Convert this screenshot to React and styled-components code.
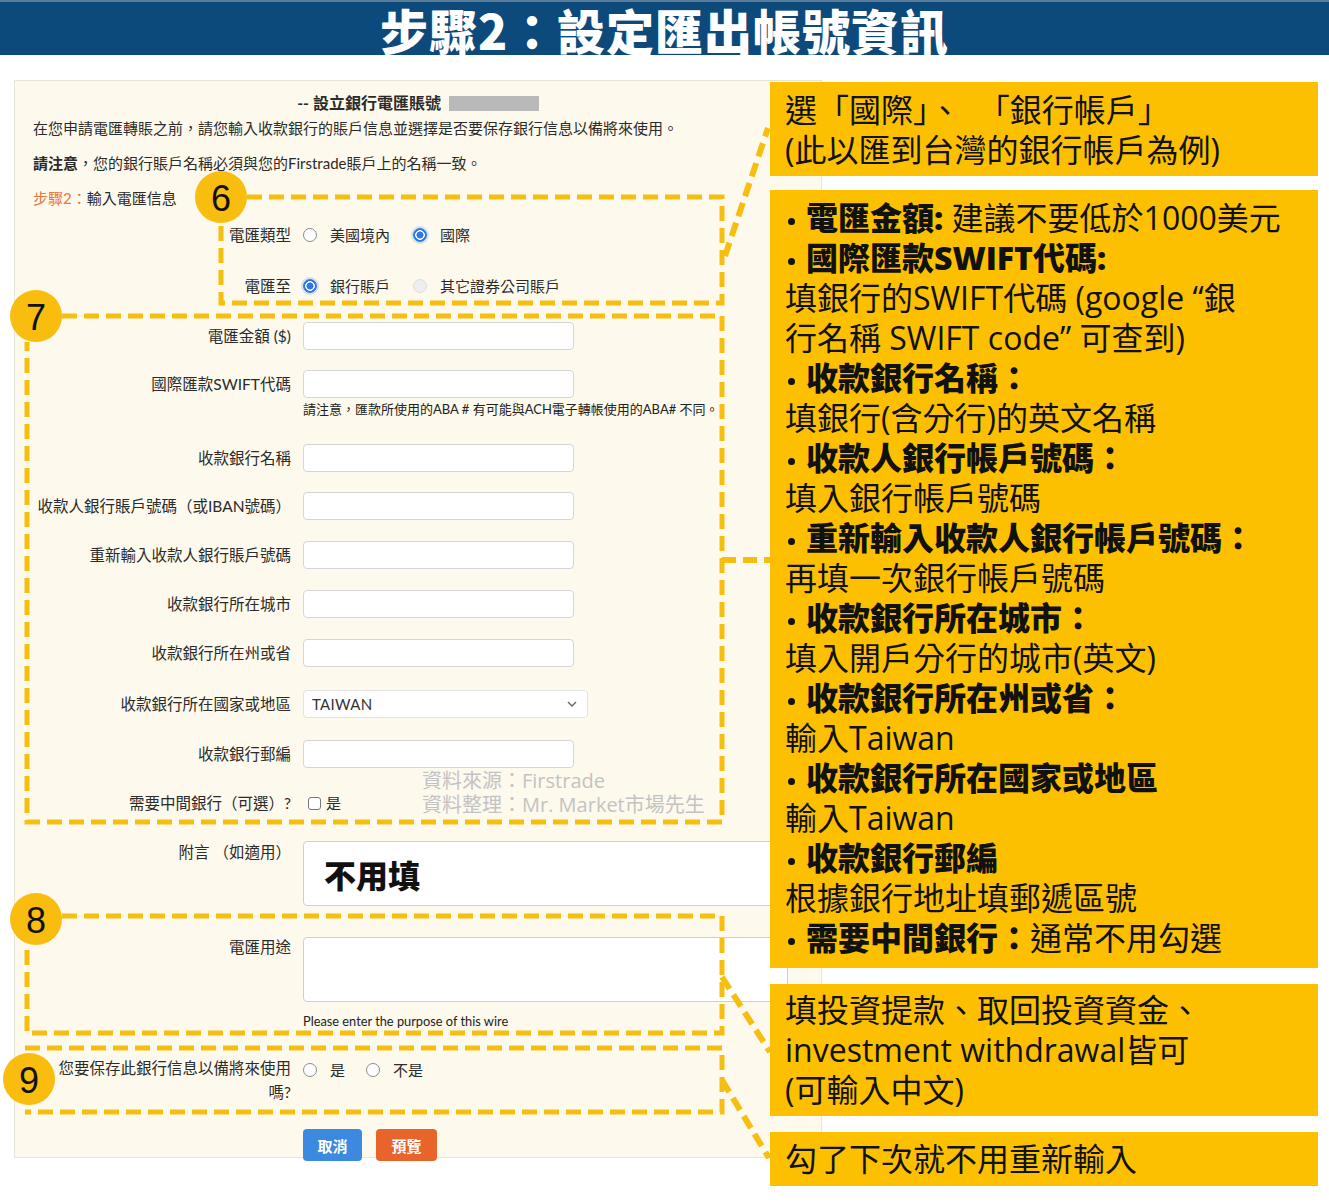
import React from 'react'
import styled, { createGlobalStyle } from 'styled-components'

const GlobalStyle = createGlobalStyle`
   body {
      margin: 0;
      background: #fff;
   }
   * {
      box-sizing: border-box;
   }
`

const fields = [
   { label: '電匯金額 ($)', mt: 22 },
   { label: '國際匯款SWIFT代碼', mt: 20, note: '請注意，匯款所使用的ABA # 有可能與ACH電子轉帳使用的ABA# 不同。' },
   { label: '收款銀行名稱', mt: 27 },
   { label: '收款人銀行賬戶號碼（或IBAN號碼）', mt: 20 },
   { label: '重新輸入收款人銀行賬戶號碼', mt: 21 },
   { label: '收款銀行所在城市', mt: 21 },
   { label: '收款銀行所在州或省', mt: 21 },
   { label: '收款銀行所在國家或地區', mt: 23, select: 'TAIWAN' },
   { label: '收款銀行郵編', mt: 22 },
]

const notes = [
   { head: '電匯金額:', text: ' 建議不要低於1000美元', bullet: true },
   { head: '國際匯款SWIFT代碼:', bullet: true },
   { text: '填銀行的SWIFT代碼 (google “銀' },
   { text: '行名稱 SWIFT code” 可查到)' },
   { head: '收款銀行名稱：', bullet: true },
   { text: '填銀行(含分行)的英文名稱' },
   { head: '收款人銀行帳戶號碼：', bullet: true },
   { text: '填入銀行帳戶號碼' },
   { head: '重新輸入收款人銀行帳戶號碼：', bullet: true },
   { text: '再填一次銀行帳戶號碼' },
   { head: '收款銀行所在城市：', bullet: true },
   { text: '填入開戶分行的城市(英文)' },
   { head: '收款銀行所在州或省：', bullet: true },
   { text: '輸入Taiwan' },
   { head: '收款銀行所在國家或地區', bullet: true },
   { text: '輸入Taiwan' },
   { head: '收款銀行郵編', bullet: true },
   { text: '根據銀行地址填郵遞區號' },
   { head: '需要中間銀行：', text: '通常不用勾選', bullet: true },
]

const badges = [
   { n: 6, x: 221, y: 197 },
   { n: 7, x: 36, y: 316 },
   { n: 8, x: 36, y: 919 },
   { n: 9, x: 29, y: 1079 },
]

const Annotations = () => (
   <Overlay viewBox="0 0 1329 1203">
      <g fill="none" stroke="#f7be12" strokeWidth="5" strokeDasharray="15 7">
         <path d="M247 197 H722 V303 H221 V223" />
         <path d="M62 316 H722 V822 H27 V342" />
         <path d="M62 916 H722 V1033 H27 V944" />
         <path d="M25 1048 H722 V1112 H25" />
      </g>
      <g fill="none" stroke="#f7be12" strokeWidth="6" strokeDasharray="14 7">
         <path d="M725 256 L768 128" />
         <path d="M722 560 H770" />
         <path d="M722 977 L770 1052" />
         <path d="M722 1080 L769 1158" />
      </g>
      {badges.map(b => (
         <g key={b.n}>
            <circle cx={b.x} cy={b.y} r="26" fill="#f9bd10" />
            <BadgeText x={b.x} y={b.y + 1} textAnchor="middle" dominantBaseline="central">{b.n}</BadgeText>
         </g>
      ))}
   </Overlay>
)

const App = () => {
   return (
      <Page>
         <GlobalStyle />
         <Header>
            <h1>步驟2：設定匯出帳號資訊</h1>
         </Header>

         <Body>
            <FormPanel>
               <FormTitle>-- 設立銀行電匯賬號 <Redacted /></FormTitle>
               <Text $mt={5}>在您申請電匯轉賬之前，請您輸入收款銀行的賬戶信息並選擇是否要保存銀行信息以備將來使用。</Text>
               <Text $mt={15}><b>請注意</b>，您的銀行賬戶名稱必須與您的Firstrade賬戶上的名稱一致。</Text>
               <Text $mt={15}><Step>步驟2：</Step>輸入電匯信息</Text>

               <Row $mt={13}>
                  <Label>電匯類型</Label>
                  <Controls>
                     <Option $w={110}><Radio />美國境內</Option>
                     <Option><Radio $checked />國際</Option>
                  </Controls>
               </Row>
               <Row $mt={23}>
                  <Label>電匯至</Label>
                  <Controls>
                     <Option $w={110}><Radio $checked />銀行賬戶</Option>
                     <Option><Radio $disabled />其它證券公司賬戶</Option>
                  </Controls>
               </Row>

               {fields.map(f => (
                  <Row $mt={f.mt} key={f.label}>
                     <Label>{f.label}</Label>
                     <div>
                        {f.select ? (
                           <Select>
                              {f.select}
                              <svg width="12" height="8" viewBox="0 0 12 8">
                                 <path d="M2 2 L6 6 L10 2" fill="none" stroke="#666" strokeWidth="1.4" />
                              </svg>
                           </Select>
                        ) : <Input />}
                        {f.note && <Hint $mt={3} $size={13}>{f.note}</Hint>}
                     </div>
                  </Row>
               ))}

               <Row $mt={21}>
                  <Label>需要中間銀行（可選）?</Label>
                  <Controls>
                     <Option $gap={5}><Checkbox />是</Option>
                  </Controls>
               </Row>

               <Row $mt={24}>
                  <Label $lh={22}>附言 （如適用）</Label>
                  <TextBox $h={65}>不用填</TextBox>
               </Row>

               <Row $mt={31}>
                  <Label $lh={20}>電匯用途</Label>
                  <div>
                     <TextBox $h={65} />
                     <Hint $mt={11} $size={12.8}>Please enter the purpose of this wire</Hint>
                  </div>
               </Row>

               <Row $mt={27}>
                  <Label $lh={24}>您要保存此銀行信息以備將來使用<br />嗎?</Label>
                  <Controls>
                     <Option $w={63}><Radio />是</Option>
                     <Option><Radio />不是</Option>
                  </Controls>
               </Row>

               <Buttons>
                  <Button $bg="#3c89e0">取消</Button>
                  <Button $bg="#e8642b" $w={61}>預覽</Button>
               </Buttons>
            </FormPanel>

            <Callouts>
               <Callout $pad="8px 15px 6px">
                  <div>選「國際」、&nbsp;&nbsp;「銀行帳戶」</div>
                  <div>(此以匯到台灣的銀行帳戶為例)</div>
               </Callout>
               <Callout $mt={14} $pad="8px 15px 10px">
                  {notes.map((n, i) => (
                     <div key={i}>
                        {n.bullet && <Dot />}
                        {n.head && <b>{n.head}</b>}
                        {n.text}
                     </div>
                  ))}
               </Callout>
               <Callout $mt={16} $pad="6px 15px 6px">
                  <div>填投資提款、取回投資資金、</div>
                  <div>investment withdrawal皆可</div>
                  <div>(可輸入中文)</div>
               </Callout>
               <Callout $mt={16} $pad="7px 15px 7px">
                  <div>勾了下次就不用重新輸入</div>
               </Callout>
            </Callouts>
         </Body>

         <Watermark>
            <div>資料來源：Firstrade</div>
            <div>資料整理：Mr. Market市場先生</div>
         </Watermark>
         <Annotations />
      </Page>
   )
}

export default App

const Page = styled.div`
   position: relative;
   width: 1329px;
   height: 1203px;
   overflow: hidden;
   background: #fff;
   font-family: Lato, "Noto Sans CJK TC", sans-serif;
`

const Header = styled.header`
   height: 55px;
   background: #0d4a7c;
   border-top: 2px solid #5a7b98;
   display: flex;
   align-items: center;
   justify-content: center;
   h1 {
      margin: 0;
      color: #fff;
      font-family: "Noto Sans CJK TC", sans-serif;
      font-weight: 900;
      font-size: 48px;
      line-height: 50px;
      letter-spacing: 1px;
   }
`

const Body = styled.div`
   display: flex;
   align-items: flex-start;
   padding-left: 14px;
`

const FormPanel = styled.div`
   width: 808px;
   height: 1078px;
   margin-top: 25px;
   padding-top: 12px;
   background: #fdf9ec;
   border: 1px solid #e8e4d8;
   color: #2b2b2b;
   font-size: 15.5px;
`

const FormTitle = styled.div`
   display: flex;
   justify-content: center;
   align-items: center;
   gap: 4px;
   font-size: 16px;
   font-weight: 700;
   line-height: 20px;
   white-space: pre;
`

const Redacted = styled.span`
   display: inline-block;
   width: 90px;
   height: 15px;
   background: #b9b9b9;
`

const Text = styled.div`
   margin-top: ${p => p.$mt}px;
   padding-left: 18px;
   font-size: 15px;
   line-height: 20px;
   b {
      font-weight: 700;
   }
`

const Step = styled.span`
   color: #e6773d;
`

const Row = styled.div`
   display: grid;
   grid-template-columns: 276px 1fr;
   column-gap: 12px;
   align-items: start;
   margin-top: ${p => p.$mt}px;
`

const Label = styled.div`
   text-align: right;
   line-height: ${p => p.$lh || 28}px;
   white-space: nowrap;
`

const Controls = styled.div`
   display: flex;
   align-items: center;
   height: 28px;
   font-size: 15px;
`

const Option = styled.label`
   display: inline-flex;
   align-items: center;
   gap: ${p => p.$gap || 13}px;
   width: ${p => (p.$w ? `${p.$w}px` : 'auto')};
   line-height: 28px;
`

const Radio = styled.span`
   width: 14px;
   height: 14px;
   flex-shrink: 0;
   border-radius: 50%;
   border: 1px solid ${p => (p.$checked ? '#2d77ea' : p.$disabled ? '#dedede' : '#8c8c8c')};
   background: ${p => (p.$checked
      ? 'radial-gradient(circle, #2d77ea 0 3.3px, #fff 3.8px 4.6px, #2d77ea 5px)'
      : p.$disabled ? '#eeeeee' : '#fff')};
   box-shadow: ${p => (p.$checked ? '0 0 0 2px rgba(45,119,234,.18)' : 'none')};
`

const Checkbox = styled.span`
   width: 13px;
   height: 13px;
   margin-left: 5px;
   border: 1px solid #777;
   border-radius: 3px;
   background: #fff;
`

const Input = styled.div`
   width: 271px;
   height: 28px;
   background: #fff;
   border: 1px solid #d6d6d6;
   border-radius: 4px;
`

const Select = styled.div`
   width: 285px;
   height: 28px;
   display: flex;
   align-items: center;
   justify-content: space-between;
   padding: 0 9px 0 8px;
   background: #fff;
   border: 1px solid #e2e2e2;
   border-radius: 4px;
   font-size: 15px;
   color: #333;
   letter-spacing: 0.3px;
`

const Hint = styled.div`
   margin-top: ${p => p.$mt}px;
   font-size: ${p => p.$size}px;
   line-height: 16px;
   color: #222;
   white-space: nowrap;
`

const TextBox = styled.div`
   width: 485px;
   height: ${p => p.$h}px;
   padding-left: 20px;
   display: flex;
   align-items: center;
   background: #fff;
   border: 1px solid #cfcfcf;
   border-radius: 4px;
   font-family: "Noto Sans CJK TC", sans-serif;
   font-size: 32px;
   font-weight: 900;
   color: #111;
`

const Buttons = styled.div`
   display: flex;
   gap: 14px;
   margin-top: 25px;
   padding-left: 288px;
`

const Button = styled.button`
   width: ${p => p.$w || 59}px;
   height: 32px;
   border: none;
   border-radius: 4px;
   background: ${p => p.$bg};
   color: #fff;
   font-family: "Noto Sans CJK TC", sans-serif;
   font-size: 15px;
   font-weight: 700;
   padding: 0;
`

const Callouts = styled.div`
   position: relative;
   z-index: 1;
   width: 548px;
   margin-top: 27px;
   margin-left: -52px;
   display: flex;
   flex-direction: column;
`

const Callout = styled.div`
   margin-top: ${p => p.$mt || 0}px;
   padding: ${p => p.$pad};
   background: #fcc000;
   color: #111;
   font-family: "Open Sans", "Noto Sans CJK TC", sans-serif;
   font-size: 32px;
   line-height: 40px;
   white-space: nowrap;
   b {
      font-weight: 800;
      font-family: "Open Sans", "Noto Sans CJK TC", sans-serif;
   }
`

const Dot = styled.span`
   display: inline-block;
   width: 7px;
   height: 7px;
   margin: 0 11px 0 3px;
   border-radius: 50%;
   background: #111;
   vertical-align: middle;
`

const Watermark = styled.div`
   position: absolute;
   left: 422px;
   top: 769px;
   z-index: 2;
   color: #c3c3c3;
   font-family: "Open Sans", "Noto Sans CJK TC", sans-serif;
   font-size: 20px;
   line-height: 24px;
   white-space: nowrap;
`

const Overlay = styled.svg`
   position: absolute;
   top: 0;
   left: 0;
   width: 1329px;
   height: 1203px;
   z-index: 3;
   pointer-events: none;
`

const BadgeText = styled.text`
   font-family: "Liberation Sans", sans-serif;
   font-size: 36px;
   fill: #111;
`
